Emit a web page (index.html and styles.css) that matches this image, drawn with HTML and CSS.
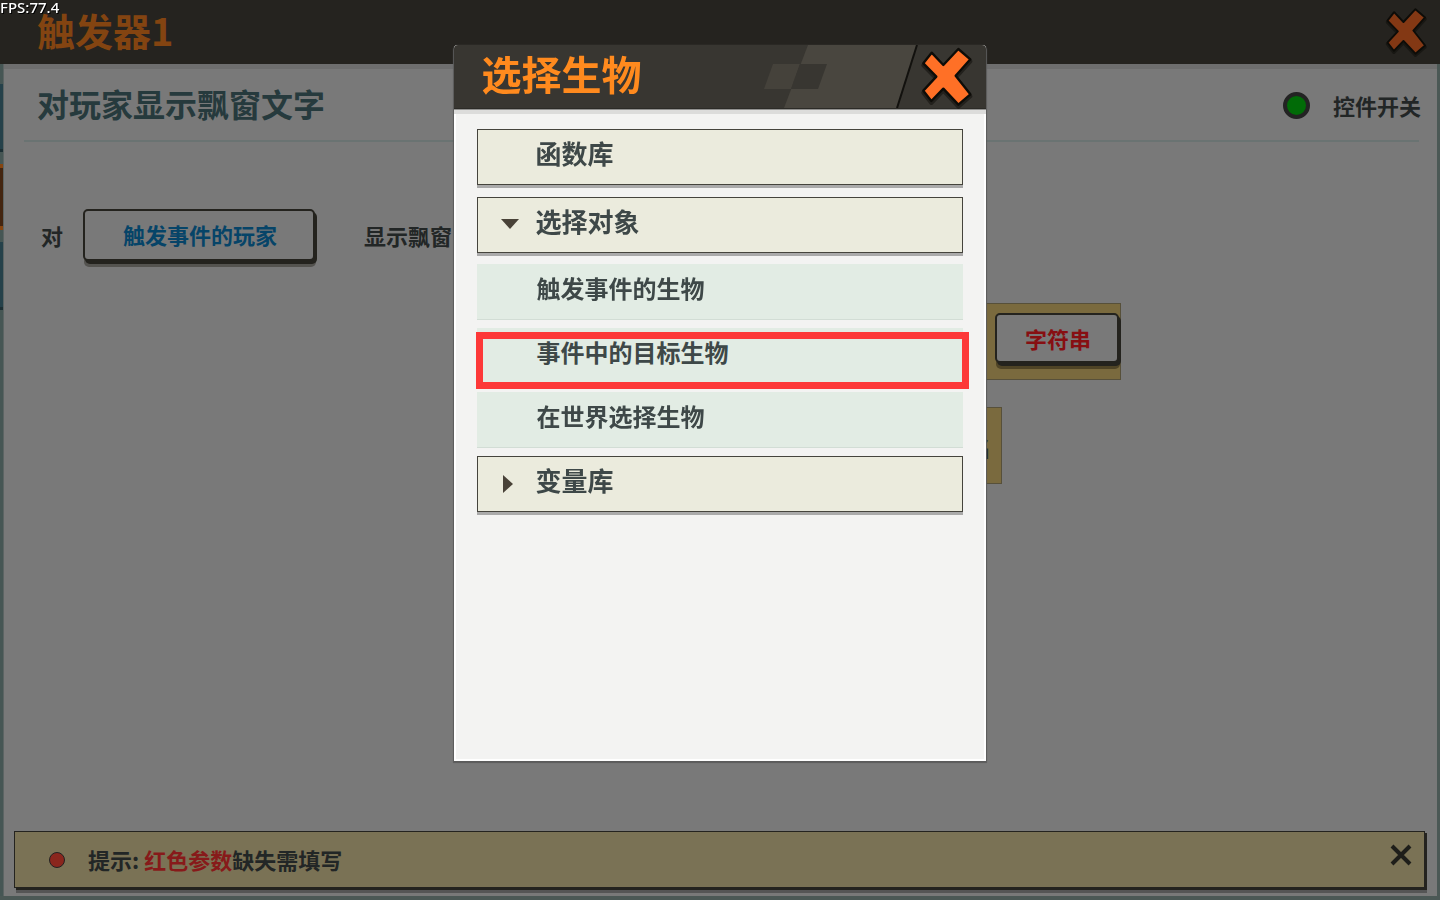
FILE: index.html
```html
<!DOCTYPE html>
<html lang="zh-CN">
<head>
  <meta charset="utf-8">
  <title>触发器1</title>
  <link rel="stylesheet" href="styles.css">
</head>
<body>
  <span class="fps">FPS:77.4</span>

  <div class="page">
    <header class="topbar">
      <h1 class="topbar-title">触发器1</h1>
      <button class="close close-small" aria-label="关闭">
        <svg viewBox="30 15 165 195">
          <path class="close-shadow" d="M43 76 68 44 103 81 148 33 184 64 140 113 184 169 148 200 103 152 67 189 43 158 82 116Z"/>
          <path class="close-cross" d="M43 70 68 38 103 75 148 27 184 58 140 107 184 163 148 194 103 146 67 183 43 152 82 110Z"/>
        </svg>
      </button>
    </header>

    <div class="workspace">
      <div class="rail">
        <div class="rail-item"></div>
        <div class="rail-item rail-active"></div>
        <div class="rail-item"></div>
      </div>

      <main class="panel">
        <div class="panel-head">
          <h2 class="panel-title">对玩家显示飘窗文字</h2>
          <label class="switch">
            <input type="checkbox" class="switch-input" checked>
            控件开关
          </label>
        </div>

        <div class="sentence">
          <span>对</span>
          <button class="param param-blue">触发事件的玩家</button>
          <span class="sentence-text">显示飘窗</span>
        </div>
        <div class="block block-wide">
          <button class="param param-red">字符串</button>
        </div>
        <div class="block block-narrow">名</div>

        <div class="tip">
          <span class="tip-dot"></span>
          <p class="tip-text">提示: <span class="tip-red">红色参数</span>缺失需填写</p>
          <button class="tip-close" aria-label="关闭提示">
            <svg viewBox="0 0 22 22"><path d="M2 2 20 20M20 2 2 20"/></svg>
          </button>
        </div>
      </main>
    </div>
  </div>

  <div class="overlay">
    <section class="dialog" role="dialog" aria-labelledby="dialog-title">
      <header class="dialog-head">
        <h2 class="dialog-title" id="dialog-title">选择生物</h2>
        <svg class="dialog-deco" viewBox="0 0 222 63">
          <path fill="#49463f" d="M44 0H153L133 63H20Z"/>
          <path fill="#45423b" d="M9 19H36L27 44H0Z"/>
          <path fill="#383631" d="M36 19H63L54 44H27Z"/>
          <path stroke="#12110e" stroke-width="2" d="M153 0 133 63"/>
        </svg>
        <button class="close close-big" aria-label="关闭">
          <svg viewBox="30 15 165 195">
            <path class="close-shadow" d="M43 76 68 44 103 81 148 33 184 64 140 113 184 169 148 200 103 152 67 189 43 158 82 116Z"/>
            <path class="close-cross" d="M43 70 68 38 103 75 148 27 184 58 140 107 184 163 148 194 103 146 67 183 43 152 82 110Z"/>
          </svg>
        </button>
      </header>

      <ul class="menu">
        <li><button class="group">函数库</button></li>
        <li>
          <button class="group group-open">选择对象</button>
          <ul class="submenu">
            <li><button class="option">触发事件的生物</button></li>
            <li class="marked"><button class="option">事件中的目标生物</button></li>
            <li><button class="option">在世界选择生物</button></li>
          </ul>
        </li>
        <li><button class="group group-closed">变量库</button></li>
      </ul>
    </section>
  </div>
</body>
</html>
```
FILE: styles.css
```css
* {
  box-sizing: border-box;
}

body {
  margin: 0;
  background: #4b5855;
  color: #222626;
  font: 700 22px/32px "Noto Sans CJK SC", sans-serif;
}

h1, h2, p, ul {
  margin: 0;
  padding: 0;
}

ul {
  list-style: none;
}

button {
  padding: 0;
  border: 0;
  background: none;
  color: inherit;
  font: inherit;
  cursor: pointer;
}

svg {
  display: block;
}

.fps {
  position: absolute;
  top: 0;
  left: 0;
  z-index: 3;
  color: #fff;
  font: 500 15px/15px "Noto Sans", sans-serif;
  text-shadow: 1px 1px 0 #000;
}

.page {
  display: flex;
  flex-direction: column;
  min-height: 100vh;
}

/* top bar */
.topbar {
  display: flex;
  justify-content: space-between;
  align-items: center;
  height: 64px;
  padding: 0 12px 0 37px;
  background: #25231f;
}

.topbar-title {
  padding-bottom: 5px;
  color: #834411;
  font-size: 38px;
  line-height: 56px;
}

.close svg {
  width: 100%;
}

.close-small {
  width: 44px;
  color: #833814;
}

.close-big {
  width: 55px;
  color: #ff7026;
}

.close-cross {
  fill: currentColor;
  stroke: #0d0c08;
  stroke-width: 7;
  stroke-linejoin: round;
}

.close-shadow {
  stroke: #0d0c08;
  stroke-width: 12;
  stroke-linejoin: round;
  opacity: 0.5;
}

/* workspace */
.workspace {
  display: flex;
  flex: 1;
  padding: 0 3px 4px 0;
}

.rail {
  display: flex;
  flex-direction: column;
  gap: 12px;
  width: 4px;
  padding-top: 20px;
  background: #465654;
  border-right: 1px solid #5c6463;
}

.rail-item {
  height: 68px;
  background: #25414a;
  border-bottom: 3px solid #1c2f34;
}

.rail-active {
  height: 66px;
  background: #432510;
  border: solid #864510;
  border-width: 4px 0;
}

.panel {
  display: flex;
  flex: 1;
  flex-direction: column;
  padding: 0 10px 8px;
  background: #797979;
  box-shadow: inset 0 5px 0 #6e6e6e;
}

.panel-head {
  display: flex;
  justify-content: space-between;
  align-items: center;
  height: 78px;
  margin: 0 8px 67px 10px;
  padding: 4px 0 0 13px;
  border-bottom: 2px solid #6a7372;
}

.panel-title {
  padding-bottom: 2px;
  color: #263a3d;
  font-size: 32px;
  line-height: 40px;
}

.switch {
  display: flex;
  align-items: center;
  gap: 23px;
  margin-right: -2px;
  padding-top: 2px;
}

.switch-input {
  width: 27px;
  height: 27px;
  margin: 0;
  appearance: none;
  background: #016b07;
  border: 4px solid #232323;
  border-radius: 50%;
}

.sentence {
  display: flex;
  align-items: center;
  gap: 20px;
  margin-left: 27px;
}

.sentence-text {
  margin-left: 29px;
}

.param {
  height: 52px;
  padding: 0 36px 3px 38px;
  background: #797979;
  border: 2px solid #24231e;
  border-radius: 5px;
  box-shadow: 2px 3px 0 #24231e, 1px 6px 0 #54534f;
}

.param-blue {
  color: #064468;
}

.param-red {
  height: 50px;
  padding: 0 26px 1px 28px;
  color: #870f12;
  box-shadow: 2px 3px 0 #24231e, 1px 6px 0 #4f4426;
}

.block {
  display: flex;
  justify-content: flex-end;
  align-items: center;
  height: 77px;
  background: #7a6a3e;
  border: 1px solid #57503a;
}

.block-wide {
  width: 40%;
  margin: 42px 306px 27px auto;
  padding: 0 1px 7px;
}

.block-narrow {
  width: 30%;
  margin-right: 425px;
  margin-left: auto;
  padding-right: 10px;
}

/* tip bar */
.tip {
  display: flex;
  align-items: center;
  height: 57px;
  margin: auto 2px 0 0;
  padding: 0 12px 0 34px;
  background: #7a7255;
  border: 1px solid #24231f;
  box-shadow: 2px 2px 0 #24231f, 2px 5px 0 #555;
}

.tip-dot {
  width: 16px;
  height: 16px;
  margin-right: 23px;
  background: #8a261d;
  border: 1px solid #222;
  border-radius: 50%;
}

.tip-text {
  padding-bottom: 2px;
}

.tip-red {
  color: #871a1a;
}

.tip-close {
  width: 22px;
  margin: 0 0 10px auto;
}

.tip-close path {
  stroke: #1e1e1a;
  stroke-width: 4;
}

/* dialog */
.overlay {
  position: fixed;
  inset: 0;
  z-index: 2;
  display: flex;
  justify-content: center;
  padding: 45px 0 139px;
}

.dialog {
  width: 37%;
  min-width: 480px;
  background: #f3f3f2;
  border-radius: 4px 4px 0 0;
  box-shadow: inset 0 -2px 0 #fff, inset 2px 0 0 #fff, inset -2px 0 0 #fff, 0 1px 1px 1px #5b5b5b;
}

.dialog-head {
  display: flex;
  align-items: center;
  position: relative;
  height: 64px;
  padding-left: 28px;
  background: #383631;
  border-bottom: 1px solid #2c2b27;
  border-radius: 4px 4px 0 0;
  box-shadow: 0 1px 0 #929290, 0 5px 0 #dcdcdb;
}

.dialog-title {
  padding-bottom: 7px;
  color: #ff8a1e;
  font-size: 40px;
  line-height: 56px;
}

.dialog-deco {
  width: 222px;
  height: 63px;
  margin-left: auto;
}

.close-big {
  position: absolute;
  top: 0;
  right: 12px;
}

.menu {
  padding: 20px 23px;
}

.group,
.option {
  display: block;
  width: 100%;
  height: 56px;
  padding: 0 0 8px 58px;
  color: #3e4848;
  text-align: left;
}

.group {
  position: relative;
  margin-bottom: 12px;
  padding-bottom: 9px;
  background: #ebebdd;
  border: 1px solid #45443d;
  font-size: 26px;
  box-shadow: 0 3px 0 #aaa;
}

.group-open::before,
.group-closed::before {
  content: "";
  position: absolute;
  top: 21px;
  left: 23px;
  border: solid transparent;
}

.group-open::before {
  border-width: 10px 9px 0;
  border-top-color: #494238;
}

.group-closed::before {
  top: 18px;
  left: 25px;
  border-width: 9px 0 9px 10px;
  border-left-color: #494238;
}

.submenu {
  margin: -1px 0 8px;
}

.submenu li {
  margin-bottom: 8px;
}

.option {
  padding-left: 60px;
  background: #e2ece4;
  border-bottom: 1px solid #d2ddd5;
  font-size: 24px;
}

.marked {
  position: relative;
}

.marked::after {
  content: "";
  position: absolute;
  inset: 4px -6px -5px -1px;
  border: 7px solid #fd3838;
  pointer-events: none;
}
```
